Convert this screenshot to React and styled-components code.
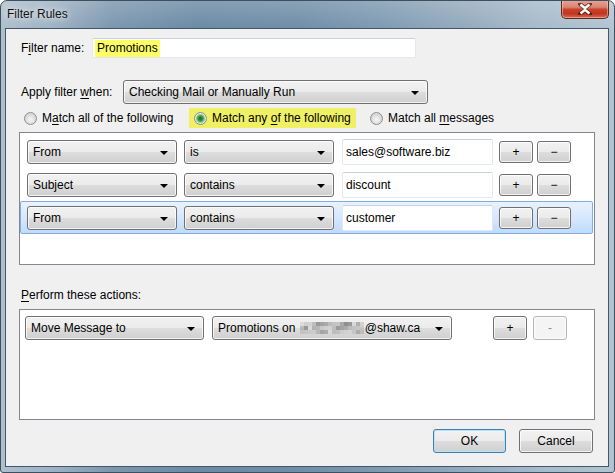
import React from "react";
import styled, { createGlobalStyle } from "styled-components";

const GlobalStyle = createGlobalStyle`
  html, body { margin: 0; padding: 0; background: #ffffff; }
  body {
    font-family: "Liberation Sans", Arial, sans-serif;
    font-size: 12px;
    color: #000;
  }
  #root { width: 615px; height: 473px; }
`;

const Window = styled.div`
  box-sizing: border-box;
  width: 615px;
  height: 473px;
  display: flex;
  flex-direction: column;
  border: 1px solid #3f4f5e;
  border-radius: 7px 7px 3px 3px;
  padding: 0 5px 5px 4px;
  background:
    linear-gradient(180deg, rgba(255,255,255,0.18) 0px, rgba(255,255,255,0) 28px),
    linear-gradient(90deg, #aebfcd 0%, #9fb3c4 8%, #7b97ae 18%, #6b8aa4 32%, #6f8da7 48%, #7e9ab1 62%, #93abbe 76%, #a7bbca 88%, #b3c4d1 100%);
  overflow: hidden;
`;

const TitleBar = styled.div`
  height: 27px;
  display: flex;
  align-items: flex-start;
  flex-shrink: 0;
`;

const Title = styled.div`
  padding: 6px 0 0 2px;
  font-size: 12px;
  color: #111;
  text-shadow: 0 0 6px rgba(255,255,255,0.9), 0 0 10px rgba(255,255,255,0.6);
`;

const CloseButton = styled.div`
  margin-left: auto;
  margin-top: -1px;
  width: 48px;
  height: 19px;
  box-sizing: border-box;
  border: 1px solid #5a2a22;
  border-top: none;
  border-radius: 0 0 5px 5px;
  background: linear-gradient(180deg, #e8a597 0%, #d98471 40%, #c9432b 52%, #c2351f 75%, #d76a4f 100%);
  box-shadow: inset 0 0 0 1px rgba(255,220,210,0.45);
  display: flex;
  align-items: center;
  justify-content: center;
`;

const Client = styled.div`
  flex: 1;
  box-sizing: border-box;
  border: 1px solid #44576a;
  background: #f0f0f0;
  display: flex;
  flex-direction: column;
  padding: 0 13px;
`;

const FormRow = styled.div`
  display: flex;
  align-items: center;
  height: ${(p) => p.$h}px;
  margin-top: ${(p) => p.$mt}px;
`;

const Label = styled.div`
  width: ${(p) => p.$w}px;
  padding-left: 2px;
  box-sizing: border-box;
  white-space: nowrap;
  flex-shrink: 0;
`;

const Key = styled.span`
  text-decoration: underline;
  text-underline-offset: 2px;
`;

const TextBox = styled.div`
  box-sizing: border-box;
  width: ${(p) => p.$w}px;
  height: ${(p) => p.$h}px;
  background: #fff;
  border: 1px solid #e2e8ee;
  border-top-color: #c9d2dc;
  border-radius: 2px;
  display: flex;
  align-items: center;
  padding-left: ${(p) => p.$pl || 3}px;
  white-space: nowrap;
  flex-shrink: 0;
`;

const Highlight = styled.span`
  background: ${(p) => p.$c || "#ffff66"};
  padding: 1px 2px 2px;
`;

const Select = styled.div`
  box-sizing: border-box;
  width: ${(p) => p.$w}px;
  height: 24px;
  flex-shrink: 0;
  border: 1px solid #707070;
  border-radius: 3px;
  background: linear-gradient(180deg, #f2f2f2 0%, #ebebeb 48%, #dddddd 52%, #cfcfcf 100%);
  box-shadow: inset 0 0 0 1px rgba(255,255,255,0.75);
  display: flex;
  align-items: center;
  padding: 0 8px 0 5px;
  white-space: nowrap;
  margin-right: ${(p) => p.$mr || 0}px;
`;

const SelectText = styled.span`
  flex: 1;
  display: block;
  line-height: 16px;
  white-space: nowrap;
  overflow: hidden;
`;

const Arrow = styled.span`
  width: 0;
  height: 0;
  border-left: 4px solid transparent;
  border-right: 4px solid transparent;
  border-top: 4px solid #000;
  margin-top: 2px;
`;

const RadioRow = styled.div`
  display: flex;
  align-items: center;
  height: 20px;
  margin-top: 4px;
`;

const RadioItem = styled.div`
  box-sizing: border-box;
  display: flex;
  align-items: center;
  height: 20px;
  width: ${(p) => (p.$w ? `${p.$w}px` : "auto")};
  padding-left: ${(p) => p.$pl || 0}px;
  margin-left: ${(p) => p.$ml || 0}px;
  background: ${(p) => (p.$hl ? "#f0f064" : "transparent")};
  white-space: nowrap;
  flex-shrink: 0;
`;

const RadioLabel = styled.span`
  white-space: nowrap;
`;

const RadioCircle = styled.span`
  box-sizing: border-box;
  width: 13px;
  height: 13px;
  border-radius: 50%;
  border: 1px solid #8e8f8f;
  background: ${(p) =>
    p.$on
      ? "radial-gradient(circle at 50% 50%, #1f6b2a 0px, #2f8a3c 2px, #69c06a 3.5px, #b9dcb8 4.5px, #e4e4e4 5px, #f4f4f4 100%)"
      : "radial-gradient(circle at 50% 60%, #f6f6f6 0px, #e6e6e6 3px, #d4d4d4 5.5px, #f2f2f2 100%)"};
  margin-right: 5px;
  flex-shrink: 0;
`;

const ListBox = styled.div`
  box-sizing: border-box;
  height: ${(p) => p.$h}px;
  margin-top: ${(p) => p.$mt}px;
  border: 1px solid #828790;
  background: #fff;
  padding-top: ${(p) => p.$pt}px;
  display: flex;
  flex-direction: column;
  flex-shrink: 0;
`;

const RuleRow = styled.div`
  box-sizing: border-box;
  height: 33px;
  margin-right: 1px;
  display: flex;
  align-items: center;
  padding-left: 6px;
  border: 1px solid ${(p) => (p.$sel ? "#84acdd" : "transparent")};
  border-radius: 2px;
  background: ${(p) =>
    p.$sel ? "linear-gradient(180deg, #e9f2fd 0%, #d6e8fd 50%, #bfdbfd 100%)" : "transparent"};
`;

const ActionRow = styled.div`
  display: flex;
  align-items: center;
  padding-left: 5px;
  height: 24px;
`;

const SmallButton = styled.div`
  box-sizing: border-box;
  width: 34px;
  height: ${(p) => p.$h || 22}px;
  flex-shrink: 0;
  border: 1px solid ${(p) => (p.$disabled ? "#b4b7b9" : "#707070")};
  border-radius: 3px;
  background: ${(p) =>
    p.$disabled
      ? "#f4f4f4"
      : "linear-gradient(180deg, #f2f2f2 0%, #ebebeb 48%, #dddddd 52%, #cfcfcf 100%)"};
  box-shadow: inset 0 0 0 1px rgba(255,255,255,0.75);
  color: ${(p) => (p.$disabled ? "#8d8d8d" : "#000")};
  display: flex;
  align-items: center;
  justify-content: center;
  font-size: 12px;
  margin-left: ${(p) => p.$ml || 0}px;
`;

const Footer = styled.div`
  display: flex;
  justify-content: flex-end;
  margin-top: 9px;
  padding-right: 2px;
  gap: 13px;
`;

const DialogButton = styled.div`
  box-sizing: border-box;
  width: ${(p) => p.$w}px;
  height: 24px;
  border: 1px solid ${(p) => (p.$def ? "#3c7fb1" : "#707070")};
  border-radius: 3px;
  background: linear-gradient(180deg, #f2f2f2 0%, #ebebeb 48%, #dddddd 52%, #cfcfcf 100%);
  box-shadow: inset 0 0 0 1px ${(p) => (p.$def ? "#b9e3f6" : "rgba(255,255,255,0.75)")};
  display: flex;
  align-items: center;
  justify-content: center;
`;

const SectionLabel = styled.div`
  margin-top: 22px;
  height: 16px;
  line-height: 16px;
  padding-left: 2px;
`;

const BlurSvg = styled.svg`
  vertical-align: -2px;
  margin: 0 1px;
`;

const Blur = () => {
  const cols = [
    "#c9c9c9", "#d8d8d8", "#a9a9a9", "#bcbcbc", "#9a9a9a", "#cfcfcf", "#b1b1b1", "#8f8f8f",
    "#c3c3c3", "#a3a3a3", "#d2d2d2", "#b7b7b7", "#999999", "#c6c6c6", "#aaaaaa", "#bdbdbd",
  ];
  const rows = 3;
  const n = 16;
  const rects = [];
  for (let r = 0; r < rows; r++) {
    for (let c = 0; c < n; c++) {
      const col = cols[(c * 5 + r * 7) % cols.length];
      const edge = c === 0 || c === n - 1;
      rects.push(
        <rect key={`${r}-${c}`} x={c * 4} y={r * 4} width="4" height="4" fill={col} opacity={edge ? 0.5 : r === 2 ? 0.7 : 1} />
      );
    }
  }
  return (
    <BlurSvg width="64" height="12" viewBox="0 0 64 12">
      {rects}
    </BlurSvg>
  );
};

const CloseX = () => (
  <svg width="14" height="12" viewBox="0 0 14 12">
    <path d="M2 1 L7 5 L12 1 M2 11 L7 7 L12 11" stroke="#3a1510" strokeWidth="4" fill="none" strokeLinecap="square" opacity="0.7" />
    <path d="M2.5 1.5 L7 5.2 L11.5 1.5 M2.5 10.5 L7 6.8 L11.5 10.5" stroke="#fff" strokeWidth="2.4" fill="none" />
  </svg>
);

const DropDown = ({ w, mr, children }) => (
  <Select $w={w} $mr={mr}>
    <SelectText>{children}</SelectText>
    <Arrow />
  </Select>
);

const rules = [
  { field: "From", op: "is", value: "sales@software.biz" },
  { field: "Subject", op: "contains", value: "discount" },
  { field: "From", op: "contains", value: "customer", sel: true },
];

export default function App() {
  return (
    <>
      <GlobalStyle />
      <Window>
        <TitleBar>
          <Title>Filter Rules</Title>
          <CloseButton>
            <CloseX />
          </CloseButton>
        </TitleBar>
        <Client>
          <FormRow $h={20} $mt={9}>
            <Label $w={73}>
              F<Key>i</Key>lter name:
            </Label>
            <TextBox $w={324} $h={20} $pl={2}>
              <Highlight $c="#ffff66">Promotions</Highlight>
            </TextBox>
          </FormRow>
          <FormRow $h={24} $mt={22}>
            <Label $w={104}>
              Apply filter <Key>w</Key>hen:
            </Label>
            <DropDown w={305}>Checking Mail or Manually Run</DropDown>
          </FormRow>
          <RadioRow>
            <RadioItem $w={170} $pl={5}>
              <RadioCircle />
              <RadioLabel>
                M<Key>a</Key>tch all of the following
              </RadioLabel>
            </RadioItem>
            <RadioItem $hl $w={167} $pl={5}>
              <RadioCircle $on />
              <RadioLabel>
                Match any <Key>o</Key>f the following
              </RadioLabel>
            </RadioItem>
            <RadioItem $ml={14}>
              <RadioCircle />
              <RadioLabel>
                Match all <Key>m</Key>essages
              </RadioLabel>
            </RadioItem>
          </RadioRow>
          <ListBox $h={133} $mt={4} $pt={2}>
            {rules.map((r, i) => (
              <RuleRow key={i} $sel={r.sel}>
                <DropDown w={150} mr={7}>{r.field}</DropDown>
                <DropDown w={150} mr={8}>{r.op}</DropDown>
                <TextBox $w={151} $h={26}>{r.value}</TextBox>
                <SmallButton $ml={6}>+</SmallButton>
                <SmallButton $ml={4}>&minus;</SmallButton>
              </RuleRow>
            ))}
          </ListBox>
          <SectionLabel>
            <Key>P</Key>erform these actions:
          </SectionLabel>
          <ListBox $h={111} $mt={6} $pt={6}>
            <ActionRow>
              <DropDown w={179} mr={8}>Move Message to</DropDown>
              <DropDown w={240}>
                Promotions on <Blur />@shaw.ca
              </DropDown>
              <SmallButton $ml={41} $h={24}>+</SmallButton>
              <SmallButton $ml={6} $h={24} $disabled>-</SmallButton>
            </ActionRow>
          </ListBox>
          <Footer>
            <DialogButton $def $w={73}>OK</DialogButton>
            <DialogButton $w={74}>Cancel</DialogButton>
          </Footer>
        </Client>
      </Window>
    </>
  );
}
